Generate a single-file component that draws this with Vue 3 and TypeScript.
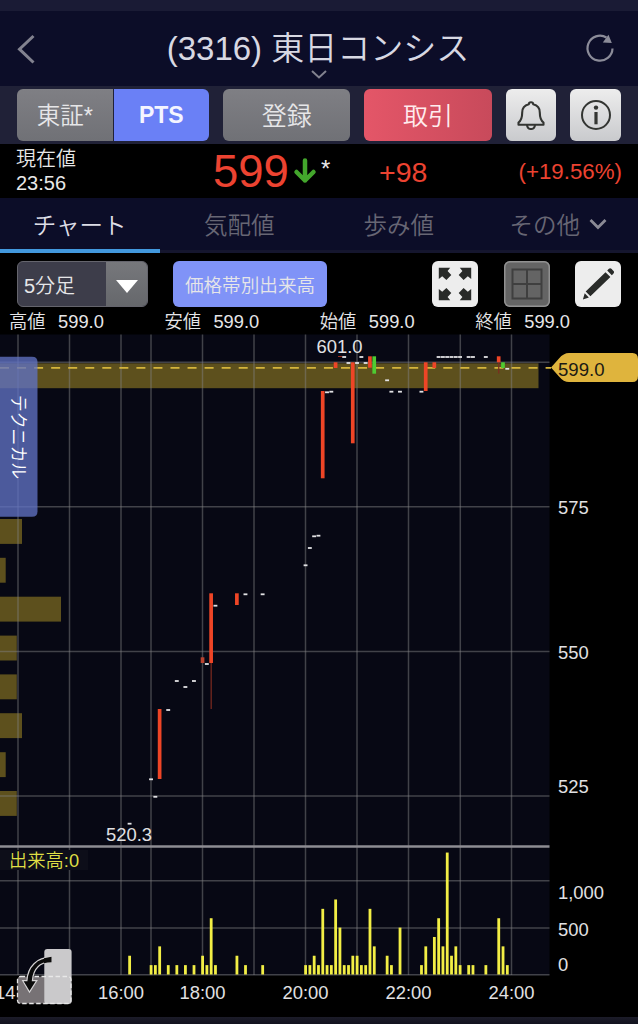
<script setup lang="ts">
interface Candle { slot: number; top: number; bottom: number; color: string; low?: number }

const RED = '#ee4526'
const GREEN = '#4fcb32'

const slotX = (slot: number): number => 305.6 + slot * 4.292

const tabs = ['チャート', '気配値', '歩み値', 'その他']
const prices = ['高値', '安値', '始値', '終値'].map(label => ({ label, value: '599.0' }))

const gridX = [18, 69.5, 121, 151, 202.5, 254, 305.5, 357, 408.5, 460.3, 511.5]
const gridY = [362.3, 506.7, 651.5, 796, 880.8, 928, 974.8]

const profile = [
  { y: 363.3, w: 538.5 }, { y: 519, w: 22 }, { y: 557.8, w: 5.7 }, { y: 596.7, w: 61 },
  { y: 635.6, w: 16.8 }, { y: 674.4, w: 16.8 }, { y: 713.2, w: 22 }, { y: 752.2, w: 5.7 }, { y: 791, w: 16.8 },
]

const candles: Candle[] = [
  { slot: -34, top: 709, bottom: 779, color: RED },
  { slot: -24, top: 657.3, bottom: 663, color: '#b8432f' },
  { slot: -22, top: 593.3, bottom: 663, color: RED, low: 709 },
  { slot: -16, top: 593.3, bottom: 605, color: RED },
  { slot: 4, top: 391, bottom: 478.3, color: RED },
  { slot: 7, top: 362.3, bottom: 368, color: RED },
  { slot: 11, top: 362.3, bottom: 443.3, color: RED },
  { slot: 15, top: 356.3, bottom: 367.7, color: RED },
  { slot: 16, top: 356.3, bottom: 373.7, color: GREEN },
  { slot: 28, top: 362.3, bottom: 391, color: RED },
  { slot: 30, top: 362.3, bottom: 368, color: RED },
  { slot: 45, top: 356.3, bottom: 362.3, color: RED, low: 373.5 },
  { slot: 46, top: 362.3, bottom: 368, color: GREEN },
]

const ticks: [number, number][] = [
  [-41, 823.7], [-36, 779.3], [-35, 796.8], [-32, 710], [-30, 681], [-28, 687], [-26, 681],
  [-23, 664], [-21, 605.7], [-14, 594.3], [-10, 594.3], [0, 565.3], [1, 548], [2, 536.3], [3, 535.7],
  [5, 392.3], [6, 391.7], [9, 357], [10, 363], [12, 363], [13, 357], [14, 363], [19, 380.3],
  [20, 391.7], [22, 391.7], [27, 391.7], [31, 357], [32, 357], [33, 357], [34, 357], [35, 357], [36, 357],
  [38, 357], [39, 357], [42, 357], [47, 368.8],
]

// [slot, volume in hundreds]
const volumes: [number, number][] = [
  [-41, 2], [-36, 1], [-35, 1], [-34, 3], [-32, 1], [-30, 1], [-28, 1], [-26, 1], [-24, 2], [-23, 1],
  [-22, 6], [-21, 1], [-16, 2], [-14, 1], [-10, 1], [0, 1], [1, 1], [2, 2], [3, 1], [4, 7], [5, 1],
  [6, 1], [7, 8], [8, 5], [9, 1], [10, 1], [11, 2], [12, 2], [13, 1], [14, 1], [15, 7], [16, 3],
  [19, 2], [20, 1], [22, 5], [27, 1], [28, 3], [30, 4], [31, 6], [32, 3], [33, 13], [34, 2], [35, 3],
  [36, 1], [38, 1], [39, 1], [42, 1], [45, 6], [46, 3], [47, 1],
]

const axisLabels = [
  { y: 514, text: '575' }, { y: 659, text: '550' }, { y: 792.5, text: '525' },
  { y: 899, text: '1,000' }, { y: 935.5, text: '500' }, { y: 971, text: '0' },
]
const timeLabels = [
  { x: 121, text: '16:00' }, { x: 202.5, text: '18:00' }, { x: 305.5, text: '20:00' },
  { x: 408.5, text: '22:00' }, { x: 511.5, text: '24:00' },
]
</script>

<template>
  <div class="app">
    <div class="status"></div>
    <header class="header">
      <svg class="back" width="20" height="30" viewBox="0 0 20 30"><path d="M17.500 2 3.500 15.200 17.500 28.500" /></svg>
      <h1>(3316) 東日コンシス</h1>
      <svg class="reload" width="30" height="30" viewBox="0 0 30 30">
        <path d="M27.500 15.500A12.500 12.500 0 1 1 21.500 4.500" fill="none" stroke="#8c8c99" stroke-width="2.200" />
        <path d="M23.500 1.800 26.800 10 17.800 9.600z" fill="#8c8c99" />
      </svg>
      <svg class="expand" width="18" height="11" viewBox="0 0 18 11"><path d="M2 2 9 8.500 16 2" /></svg>
    </header>

    <nav class="actions">
      <div class="segment">
        <button class="gray left"><span>東証*</span></button>
        <button class="pts">PTS</button>
      </div>
      <button class="gray wide"><span>登録</span></button>
      <button class="trade wide"><span>取引</span></button>
      <button class="square">
        <svg width="28" height="30" viewBox="0 0 28 30" fill="none" stroke="#333532" stroke-width="2.100" stroke-linejoin="round">
          <path d="M14 2.200c-1.500 0-2.200.8-2.200 2.100C7.500 5.300 5.200 8.500 5.200 12.500c0 6-1.200 8.200-3.700 10v2.300h25v-2.300c-2.500-1.800-3.700-4-3.700-10 0-4-2.300-7.200-6.600-8.200 0-1.300-.7-2.100-2.200-2.100z" />
          <path d="M10 25c.3 2.600 1.800 4 4 4s3.700-1.400 4-4" />
        </svg>
      </button>
      <button class="square info">
        <svg width="32" height="32" viewBox="0 0 32 32">
          <circle cx="16" cy="16" r="14" fill="none" stroke="#333532" stroke-width="2" />
          <circle cx="16" cy="8.600" r="2.200" fill="#333532" />
          <path d="M14.400 13h3.200v12.300h-3.200z" fill="#333532" />
        </svg>
      </button>
    </nav>

    <section class="quote">
      <div class="when"><span>現在値</span><span>23:56</span></div>
      <div class="last">599</div>
      <svg class="down" width="24" height="26" viewBox="0 0 24 26"><path d="M12 2.500v20M3.500 14l8.500 8.500L20.500 14" /></svg>
      <div class="star">*</div>
      <div class="change">+98</div>
      <div class="percent">(+19.56%)</div>
    </section>

    <nav class="tabs">
      <div v-for="(tab, i) in tabs" :key="tab" class="tab" :class="{ active: i === 0 }">
        <span>{{ tab }}</span>
        <svg v-if="i === 3" width="18" height="12" viewBox="0 0 18 12"><path d="M1.500 2 9 9.500 16.500 2" /></svg>
      </div>
    </nav>

    <section class="tools">
      <div class="select">
        <span>5分足</span>
        <div class="arrow"><svg width="22" height="13" viewBox="0 0 22 13"><path d="M0 0h22L11 13z" fill="#fff" /></svg></div>
      </div>
      <button class="profile"><span>価格帯別出来高</span></button>
      <button class="tool">
        <svg width="34" height="34" viewBox="0 0 34 34" fill="#292b29">
          <path d="M.8.800h11.400L9.600 4 13.300 7.900 8.400 13 4.200 9.200.8 12z" />
          <path d="M.8.800h11.400L9.600 4 13.300 7.900 8.400 13 4.200 9.200.8 12z" transform="matrix(-1 0 0 1 34 0)" />
          <path d="M.8.800h11.400L9.600 4 13.300 7.900 8.400 13 4.200 9.200.8 12z" transform="matrix(1 0 0 -1 0 34)" />
          <path d="M.8.800h11.400L9.600 4 13.300 7.900 8.400 13 4.200 9.200.8 12z" transform="matrix(-1 0 0 -1 34 34)" />
        </svg>
      </button>
      <button class="tool disabled">
        <svg width="32" height="32" viewBox="0 0 32 32" fill="none" stroke="#3f3f3f" stroke-width="2">
          <path d="M1.500 1.500h29v29h-29zM16 1.500v29M1.500 16h29" />
        </svg>
      </button>
      <button class="tool">
        <svg width="34" height="34" viewBox="0 0 34 34" fill="#292b29">
          <path d="m24.500 5.200 4.900 4.900L9.400 29.300 4.700 24.600zM26.200 3.500l1.700-1.700c.8-.8 1.700-.8 2.500 0L32.500 4c.8.800.8 1.700 0 2.400l-1.700 1.800zM3.700 26.300l4.200 4.100-6 2.100z" />
        </svg>
      </button>
    </section>

    <section class="prices">
      <div v-for="p in prices" :key="p.label" class="price"><span>{{ p.label }}</span><span>{{ p.value }}</span></div>
    </section>

    <svg class="chart" width="638" height="683" viewBox="0 334 638 683">
      <rect x="0" y="334.500" width="549.500" height="641" fill="#070814" />
      <g fill="#5d501d"><rect v-for="b in profile" :key="b.y" x="0" :y="b.y" :width="b.w" height="24.900" /></g>
      <g stroke="#828284" stroke-opacity=".48" stroke-width="1.500">
        <line v-for="x in gridX" :key="x" :x1="x" :x2="x" y1="334.500" y2="975" />
        <line v-for="y in gridY" :key="y" :y1="y" :y2="y" x1="0" x2="549.500" />
      </g>
      <line x1="0" x2="551" y1="367.800" y2="367.800" stroke="#d5b53c" stroke-width="1.700" stroke-dasharray="9 8.050" />
      <line x1="0" x2="549.500" y1="846.500" y2="846.500" stroke="#8e8d93" stroke-width="2.400" />
      <rect x="0" y="850" width="88" height="20" fill="#0d0e19" />

      <g v-for="c in candles" :key="c.slot">
        <line v-if="c.low" :x1="slotX(c.slot)" :x2="slotX(c.slot)" :y1="c.bottom" :y2="c.low" stroke="#7e2b20" stroke-width="1.200" />
        <rect :x="slotX(c.slot) - 1.900" :y="c.top" width="3.700" :height="c.bottom - c.top" :fill="c.color" />
      </g>
      <rect x="338" y="356" width="4" height="1" fill="#a12f20" />
      <g fill="#e2e2e4">
        <rect v-for="t in ticks" :key="t[0]" :x="slotX(t[0]) - 2" :y="t[1] - 0.900" width="3.900" height="1.800" />
      </g>
      <g fill="#f2ee45">
        <rect v-for="v in volumes" :key="v[0]" :x="slotX(v[0]) - 1.400" :y="974.500 - v[1] * 9.380" width="2.800" :height="v[1] * 9.380" />
      </g>

      <path d="M551 367.500 559 358.500Q563.500 353 569 353H632.500Q638 353 638 359V376Q638 382 632.500 382H569Q563.500 382 559 376.500Z" fill="#dfb43d" />
      <text x="558" y="375.500" class="tag">599.0</text>
      <g class="label">
        <text x="316.500" y="352.500">601.0</text>
        <text x="106" y="841">520.3</text>
        <text v-for="l in axisLabels" :key="l.text" x="558" :y="l.y">{{ l.text }}</text>
        <text v-for="l in timeLabels" :key="l.text" :x="l.x" y="998.500" text-anchor="middle">{{ l.text }}</text>
        <text x="-5" y="998.500">14</text>
      </g>
      <text x="9" y="866.500" class="volume">出来高:0</text>

      <path d="M0 356.700H32Q37.500 356.700 37.500 362V511.500Q37.500 516.800 32 516.800H0Z" fill="#6072c3" fill-opacity=".78" />
      <text class="technical" transform="translate(12 395) rotate(90)" textLength="84" lengthAdjust="spacingAndGlyphs">テクニカル</text>

      <rect x="17.500" y="976.500" width="53" height="27" rx="3" fill="#777275" />
      <rect x="44.300" y="949" width="27.300" height="55" rx="3" fill="#cac9cb" />
      <rect x="17.500" y="976.500" width="53.500" height="27" rx="3" fill="none" stroke="#e8e8e8" stroke-width="1.300" stroke-dasharray="4.500 2.500" />
      <path d="M51 957.200V961.600C40 962.300 33.300 969 32.400 980.700H36.800L29.500 992 22.700 980.700H26.900C27.700 966.500 37 957.400 51 957.200Z" fill="#0b0b0b" stroke="#d5d3d4" stroke-width="1.200" />
      <path d="M44 958.200Q47.500 957.200 51.500 956.700V962.200Q47.500 962.300 44 963.200Z" fill="#0b0b0b" />
    </svg>
    <footer class="footer"></footer>
  </div>
</template>

<style>
body { background: #000; }
</style>

<style scoped>
.app {
  width: 638px;
  height: 1024px;
  overflow: hidden;
  display: flex;
  flex-direction: column;
  background: #000;
  color: #e6e6e8;
  font-family: "Liberation Sans", "Noto Sans CJK JP", sans-serif;
  font-weight: 350;
}
button {
  border: 0;
  padding: 0;
  font: inherit;
  color: inherit;
  display: flex;
  align-items: center;
  justify-content: center;
}
.status { height: 11px; background: #1a1b35; flex: none; }
.header {
  position: relative;
  flex: none;
  height: 75px;
  background: #0c0d28;
  display: flex;
  align-items: center;
  justify-content: space-between;
  padding: 0 23px 0 16px;
  box-sizing: border-box;
}
h1 { margin: 0; font-size: 33px; line-height: 40px; font-weight: 350; color: #d8d8e2; white-space: nowrap; padding-left: 15px; }
.back path, .expand path { fill: none; stroke: #82828f; stroke-width: 3; }
.expand { position: absolute; left: 310px; top: 58px; }
.expand path { stroke-width: 2; }
.reload { margin-top: -2px; }
.actions {
  flex: none;
  height: 58px;
  box-sizing: border-box;
  padding: 3px 17px 3px;
  background: #202137;
  display: flex;
  align-items: flex-start;
  gap: 14px;
}
.actions button { height: 52px; border-radius: 6px; font-size: 25px; }
.segment { display: flex; gap: 1px; width: 192px; }
.gray { background: linear-gradient(#7f7f84, #707176); }
.actions .left { width: 96px; border-radius: 6px 0 0 6px; font-size: 23.500px; }
.actions .pts { width: 96px; border-radius: 0 6px 6px 0; background: #6a80f6; font-size: 23px; font-weight: bold; color: #f4f5ff; }
.wide { width: 128px; }
.actions .wide span, .actions .left span { position: relative; top: -1px; }
.trade { background: linear-gradient(90deg, #e45668, #c84a5b); color: #ffecee; }
.square { width: 51px; background: linear-gradient(#ededed, #c9cacd); }
.quote { flex: none; height: 54px; display: flex; align-items: center; color: #ec4331; }
.when { width: 197px; padding-left: 16px; display: flex; flex-direction: column; font-size: 20px; line-height: 24px; color: #e8e8e8; }
.last { width: 79px; font-size: 45.500px; line-height: 54px; padding-top: 2px; }
.down { margin-left: 1px; }
.down path { fill: none; stroke: #43a62c; stroke-width: 4.500; stroke-linecap: round; stroke-linejoin: round; }
.star { color: #e8e8e8; font-size: 24px; margin-left: 4px; margin-top: -4px; width: 13px; }
.change { width: 63px; margin-left: 45px; font-size: 28.500px; padding-top: 2px; }
.percent { margin-left: auto; padding: 2px 16px 0 0; font-size: 22.300px; }
.tabs { flex: none; height: 55px; display: grid; grid-template-columns: repeat(4, 1fr); background: #0c0d28; }
.tab {
  display: flex;
  align-items: center;
  justify-content: center;
  gap: 9px;
  box-sizing: border-box;
  border-bottom: 3px solid #15162e;
  font-size: 23.500px;
  color: #676674;
}
.tab.active { color: #dddde6; border-bottom: 4px solid #4298dd; }
.tab path { fill: none; stroke: #8b8a95; stroke-width: 2.800; }
.tools { flex: none; height: 57px; box-sizing: border-box; padding: 8px 17px 3px; display: flex; align-items: flex-start; }
.select {
  width: 131px;
  height: 46px;
  box-sizing: border-box;
  border: 1.500px solid #65656d;
  border-radius: 6px;
  background: #3d3d4a;
  overflow: hidden;
  display: flex;
  align-items: center;
  justify-content: space-between;
  padding-left: 6px;
  font-size: 20px;
}
.arrow { width: 41px; height: 46px; display: flex; align-items: center; justify-content: center; background: linear-gradient(#77787c, #65676b); }
.arrow svg { margin: 4px 0 0 1px; }
.profile { width: 154px; height: 46px; margin: 0 105px 0 25px; border-radius: 6px; background: #8093f7; font-size: 18.600px; white-space: nowrap; }
.profile span { position: relative; top: -1px; }
.tool { width: 46px; height: 46px; border-radius: 6px; background: #ededed; margin-right: 25.500px; flex: none; }
.tool.disabled { background: #646464; box-shadow: inset 0 0 0 1.500px #919191; }
.tool:last-child { margin-right: 0; }
.prices { flex: none; height: 24px; display: grid; grid-template-columns: repeat(4, 155.400px); padding-left: 9px; font-size: 18.300px; line-height: 23px; }
.price { display: flex; gap: 12.500px; }
.chart { flex: none; display: block; }
.label { font-size: 18.400px; fill: #e1e1e3; }
.tag { font-size: 18.600px; fill: #1c1a14; }
.volume { font-size: 18.300px; fill: #dfdf45; }
.technical { font-size: 18px; fill: #fff; }
.footer { flex: none; height: 7px; background: linear-gradient(#1c1c29, #11121e); }
</style>
